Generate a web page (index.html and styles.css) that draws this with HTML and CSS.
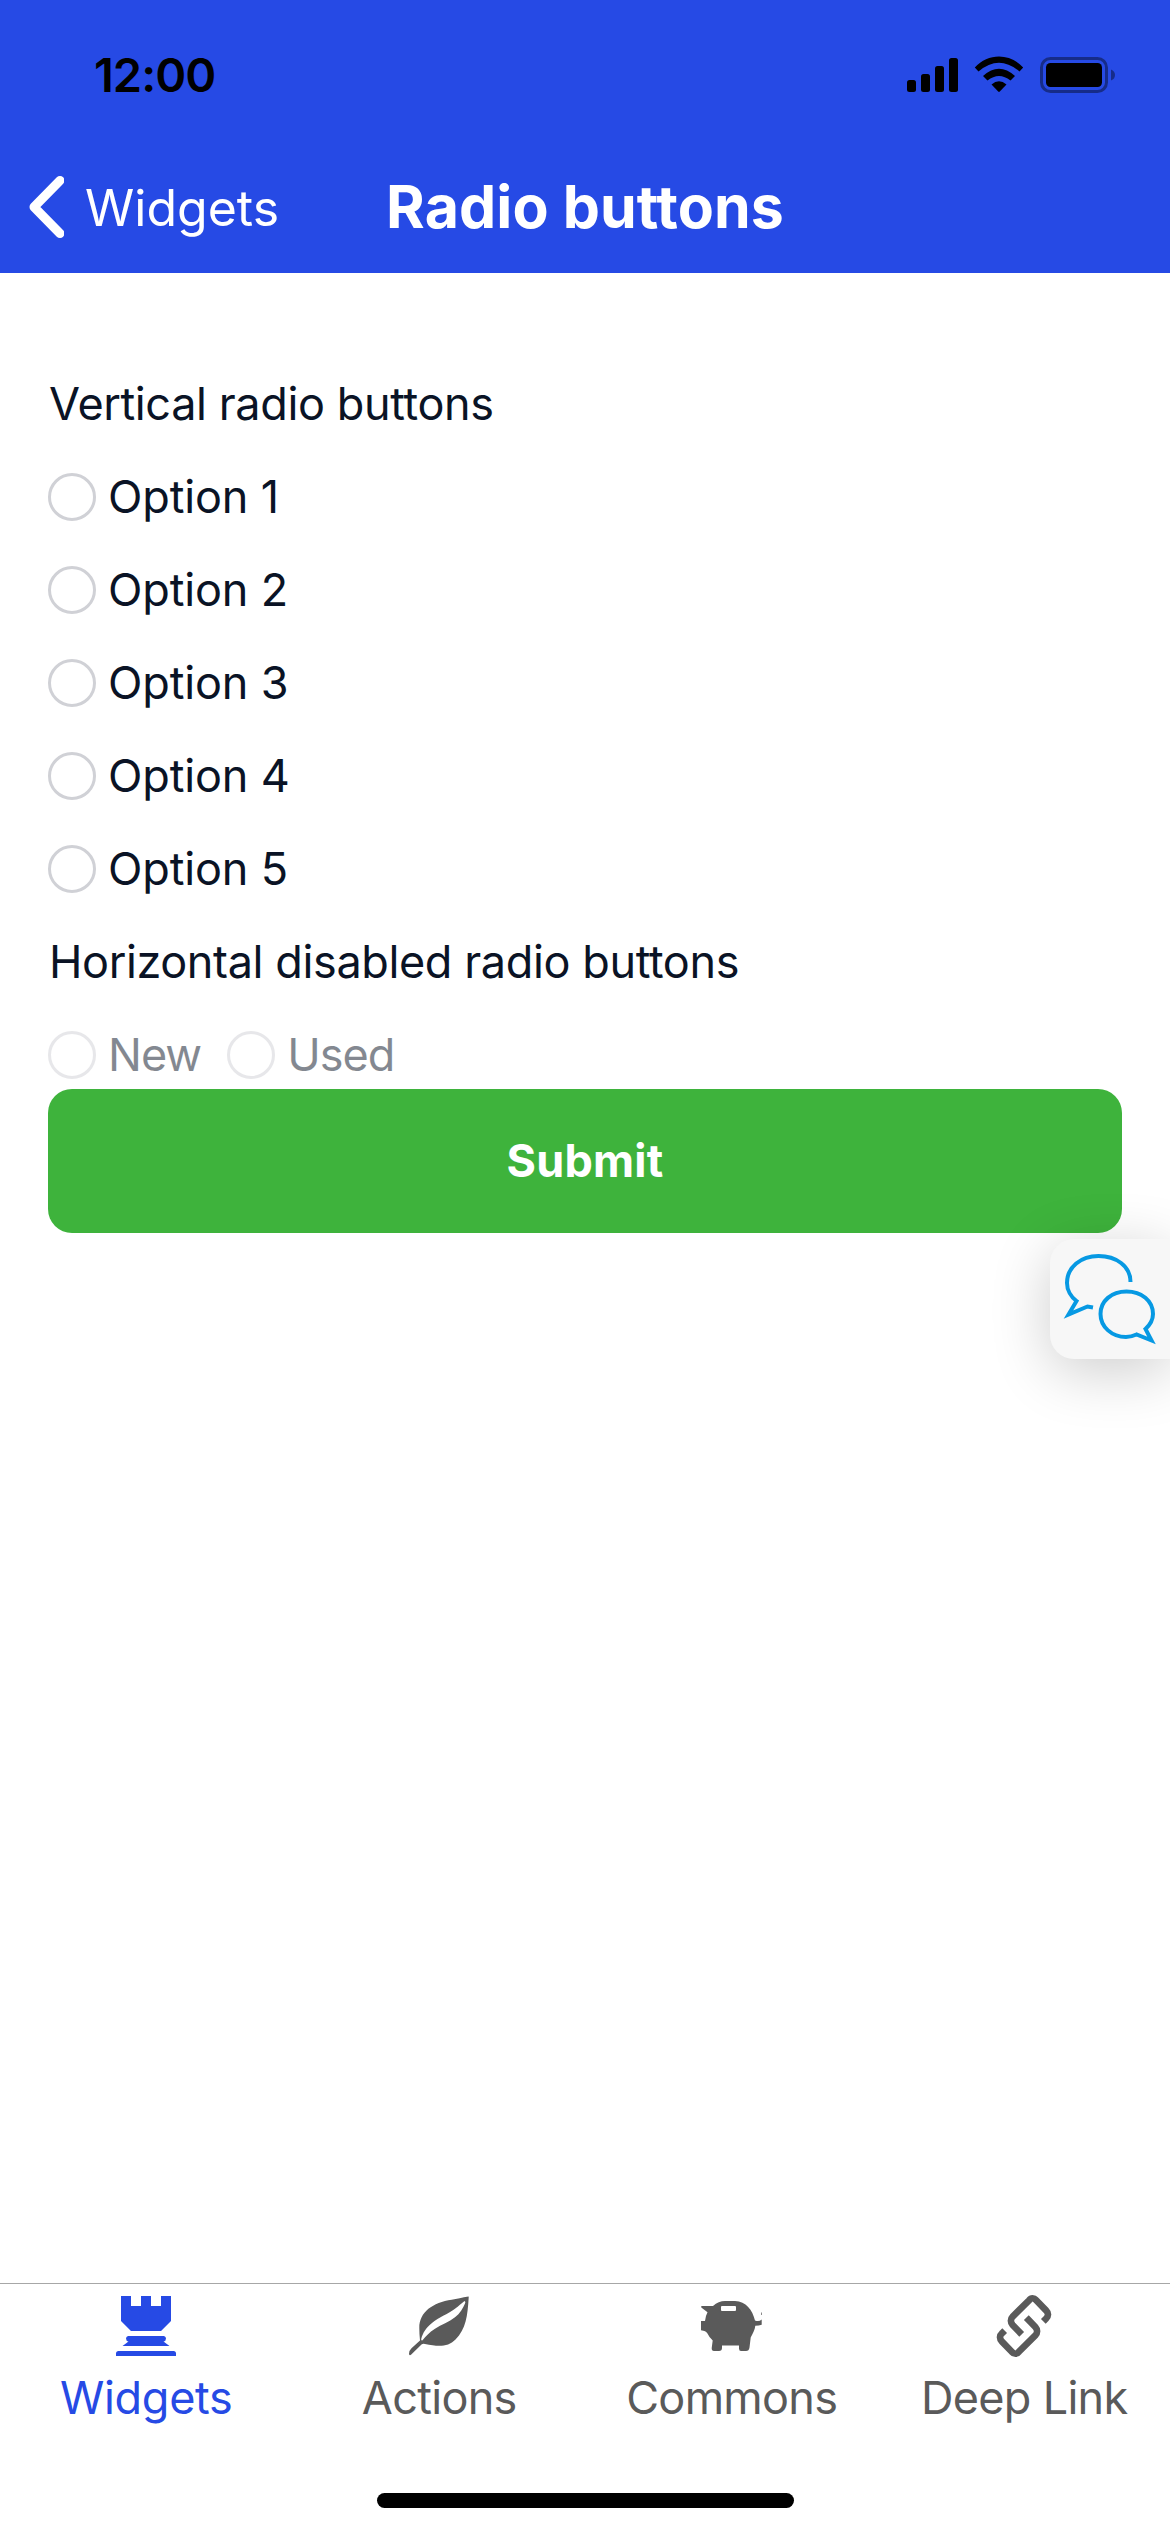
FILE: index.html
```html
<!DOCTYPE html>
<html lang="en">
<head>
<meta charset="utf-8">
<title>Radio buttons</title>
<link rel="stylesheet" href="styles.css">
</head>
<body>
<div class="screen">
  <header class="header">
    <div class="status">
      <span class="time">12:00</span>
      <svg class="status-icons" width="210" height="38" viewBox="0 0 210 38">
        <rect x="0" y="25" width="9" height="12" rx="2.5"/>
        <rect x="14" y="19" width="9" height="18" rx="2.5"/>
        <rect x="28" y="11" width="9" height="26" rx="2.5"/>
        <rect x="42" y="3" width="9" height="34" rx="2.5"/>
        <path d="M67.800 12.500C81 -2.200 103 -2.200 116.200 12.500L112.500 16.500Q92 -1 71.500 16.500Z"/>
        <path d="M76 21Q92 6.500 108 21L103.500 25.500Q92 16.500 80.500 25.500Z"/>
        <path d="M84.500 29.500Q92 23 99.500 29.500L92.800 36.500Q92 37.300 91.200 36.500Z"/>
        <rect class="battery" x="134.500" y="3.500" width="65" height="33" rx="9"/>
        <rect x="139" y="8" width="56" height="24" rx="4.500"/>
        <path class="battery-tip" d="M204 14.500Q208 16 208 20T204 25.500Z"/>
      </svg>
    </div>
    <nav class="navbar">
      <a class="back">
        <svg class="chevron" width="35" height="62" viewBox="0 0 35 62"><path d="M31 4.500L5 31L31 57.500"/></svg>
        <span class="back-label">Widgets</span>
      </a>
      <h1 class="title">Radio buttons</h1>
    </nav>
  </header>

  <main class="content">
    <div class="row heading">Vertical radio buttons</div>
    <label class="row option"><i class="radio"></i><span>Option 1</span></label>
    <label class="row option"><i class="radio"></i><span>Option 2</span></label>
    <label class="row option"><i class="radio"></i><span>Option 3</span></label>
    <label class="row option"><i class="radio"></i><span>Option 4</span></label>
    <label class="row option"><i class="radio"></i><span>Option 5</span></label>
    <div class="row heading">Horizontal disabled radio buttons</div>
    <div class="row disabled">
      <label class="option"><i class="radio"></i><span>New</span></label>
      <label class="option"><i class="radio"></i><span>Used</span></label>
    </div>
    <button class="submit"><span>Submit</span></button>
  </main>

  <aside class="chat">
    <svg width="120" height="120" viewBox="0 0 120 120">
      <path d="M80.500 43C80.500 27 66 17 48.500 17S17 28 17 44C17 51 21 58 26.500 62L18.500 75.500L37.500 67.500L43 68.500"/>
      <path d="M95.500 90Q103 83 103 75C103 61.500 91.500 52.500 76.500 52.500S50.500 62 50.500 75S62 98 76 98Q81 98 86.500 95.500L101.500 101.500Z"/>
    </svg>
  </aside>

  <footer class="tabbar">
    <a class="tab active">
      <svg width="72" height="72" viewBox="0 0 72 72">
        <path d="M11 6H21V16H31V6H41V16H51V6H61V31L51 41H21L11 31Z"/>
        <path d="M18 46H54Q56 46.500 56 48.500Q56 51 53.500 51.500L59.500 56H12.500L18.500 51.500Q16 51 16 48.500Q16 46.500 18 46Z"/>
        <path d="M6 66V63.500Q6 61 8.500 61H63.500Q66 61 66 63.500V66Z"/>
      </svg>
      <span class="label-widgets">Widgets</span>
    </a>
    <a class="tab">
      <svg width="72" height="72" viewBox="0 0 72 72">
        <path fill-rule="evenodd" d="M65.500 6.500C59 7.500 54 9 48.700 9.800C30 12.500 16.300 22 16.300 38Q16.300 44 17 50.500L8.500 58.200Q5.500 61 6 64Q6.500 66 8 64.800L18.500 54.500Q20 53.300 22 54C36 57 45 57 52.500 49.500C63 39 64.500 26 65.700 7.500Q65.800 6.500 65.500 6.500ZM61.500 11Q63 11.500 62 13.500C60 18 57 23.500 52 27.300C46 32 38.500 34.500 32 38.800C26 42.500 23 46.500 19.500 50.300Q18 51 18.200 49C20 42.500 23 38 28.700 33.300C36 27 45.500 24 52 18.800C56 16 58 13.500 61.500 11Z"/>
      </svg>
      <span class="label-actions">Actions</span>
    </a>
    <a class="tab">
      <svg width="72" height="72" viewBox="0 0 72 72">
        <path fill-rule="evenodd" d="M6.300 16H18Q23.500 11 30 11H40C51 11.500 57.500 20 60 30.500Q64 32 66.700 29.500V34.700Q64 35.800 60.300 35.800C60 40 57.500 44 55.700 47.500L54.500 57.500Q54 61 51 61H46Q44 61 44 58.500V55.500H27V58Q27 61 24 61H19Q16.500 61 16.700 58L17.700 50.500Q14 47 12.300 43.300Q11 41 6 40.300V31H10Q10.500 26 12.500 22.300L6.300 17.500ZM27 16Q26 16 26 17V20Q26 21 27 21H40Q41 21 41 20V17Q41 16 40 16Z"/>
        <path d="M66 22.500H66.700V25H66Z"/>
      </svg>
      <span class="label-commons">Commons</span>
    </a>
    <a class="tab">
      <svg width="72" height="72" viewBox="0 0 72 72">
        <g class="link" transform="translate(-8 -10) scale(.33333)">
          <path d="M125 163L98 135C91 127 91 117 98 110L148 60C153 53 162 53 168 60L198 91C206 99 206 109 198 116L190 124"/>
          <path transform="rotate(180 132 138)" d="M125 163L98 135C91 127 91 117 98 110L148 60C153 53 162 53 168 60L198 91C206 99 206 109 198 116L190 124"/>
        </g>
      </svg>
      <span class="label-link">Deep Link</span>
    </a>
    <div class="home"></div>
  </footer>
</div>
</body>
</html>
```

FILE: styles.css
```css
* { box-sizing: border-box; }
body { margin: 0; background: #fff; font-family: Inter, "Liberation Sans", sans-serif; color: #0a1325; }
.screen { position: relative; width: 1170px; height: 2532px; display: flex; flex-direction: column; overflow: hidden; }
.header { height: 273px; background: #264ae5; color: #fff; }
.status { height: 141px; padding: 18px 53px 0 94px; display: flex; align-items: center; justify-content: space-between; color: #000; }
.time { font-size: 47px; font-weight: 600; line-height: 56px; letter-spacing: -1px; padding-bottom: 10px; }
.status-icons { margin-bottom: 12px; }
.battery { fill: none; stroke: #000; stroke-opacity: .4; stroke-width: 3; }
.battery-tip { fill-opacity: .4; }
.navbar { height: 132px; display: grid; grid-template-columns: 1fr auto 1fr; align-items: center; }
.back { display: flex; align-items: center; gap: 21px; padding-left: 29px; }
.chevron path { fill: none; stroke: #fff; stroke-width: 9; stroke-linecap: round; stroke-linejoin: round; }
.back-label { font-size: 50px; line-height: 60px; padding-top: 1px; }
.title { margin: 0; font-size: 59px; line-height: 70px; font-weight: 700; letter-spacing: .1px; }
.content { flex: 1; padding: 84.500px 48px 0; font-size: 45px; line-height: 56px; }
.row { height: 93px; display: flex; align-items: center; }
.heading { letter-spacing: -.38px; padding-left: 1px; }
.option { display: flex; align-items: center; gap: 12px; letter-spacing: -.15px; }
.radio { width: 48px; height: 48px; border: 3px solid #d0d1d6; border-radius: 50%; }
.disabled { gap: 26px; opacity: .5; }
.disabled .option { letter-spacing: -1px; }
.submit { display: flex; justify-content: center; align-items: center; width: 100%; height: 144px; margin-top: -13px; border: 0; border-radius: 24px; background: #3eb33c; color: #fff; font: 700 45px/56px Inter, "Liberation Sans", sans-serif; letter-spacing: .2px; }
.chat { position: absolute; right: 0; top: 1239px; width: 120px; height: 120px; border-radius: 24px 0 0 24px; background: #f7f7f7; box-shadow: 0 12px 60px rgba(0,0,0,.2); }
.chat path { fill: none; stroke: #0799e3; stroke-width: 4; }
.tabbar { height: 249px; border-top: 1px solid #a7a7a7; display: grid; grid-template-columns: repeat(4, 1fr); grid-template-rows: 209px 15px; font-size: 45px; line-height: 56px; color: #5a5a5a; }
.tab { display: flex; flex-direction: column; align-items: center; padding-top: 6px; gap: 8px; fill: currentColor; }
.active { color: #264ae5; }
.link { fill: none; stroke: currentColor; stroke-width: 20; }
.label-widgets { letter-spacing: -.3px; }
.label-actions, .label-commons, .label-link { letter-spacing: -.7px; padding-left: 1px; }
.home { grid-column: 1 / -1; justify-self: center; width: 417px; height: 15px; border-radius: 8px; background: #000; }
```
